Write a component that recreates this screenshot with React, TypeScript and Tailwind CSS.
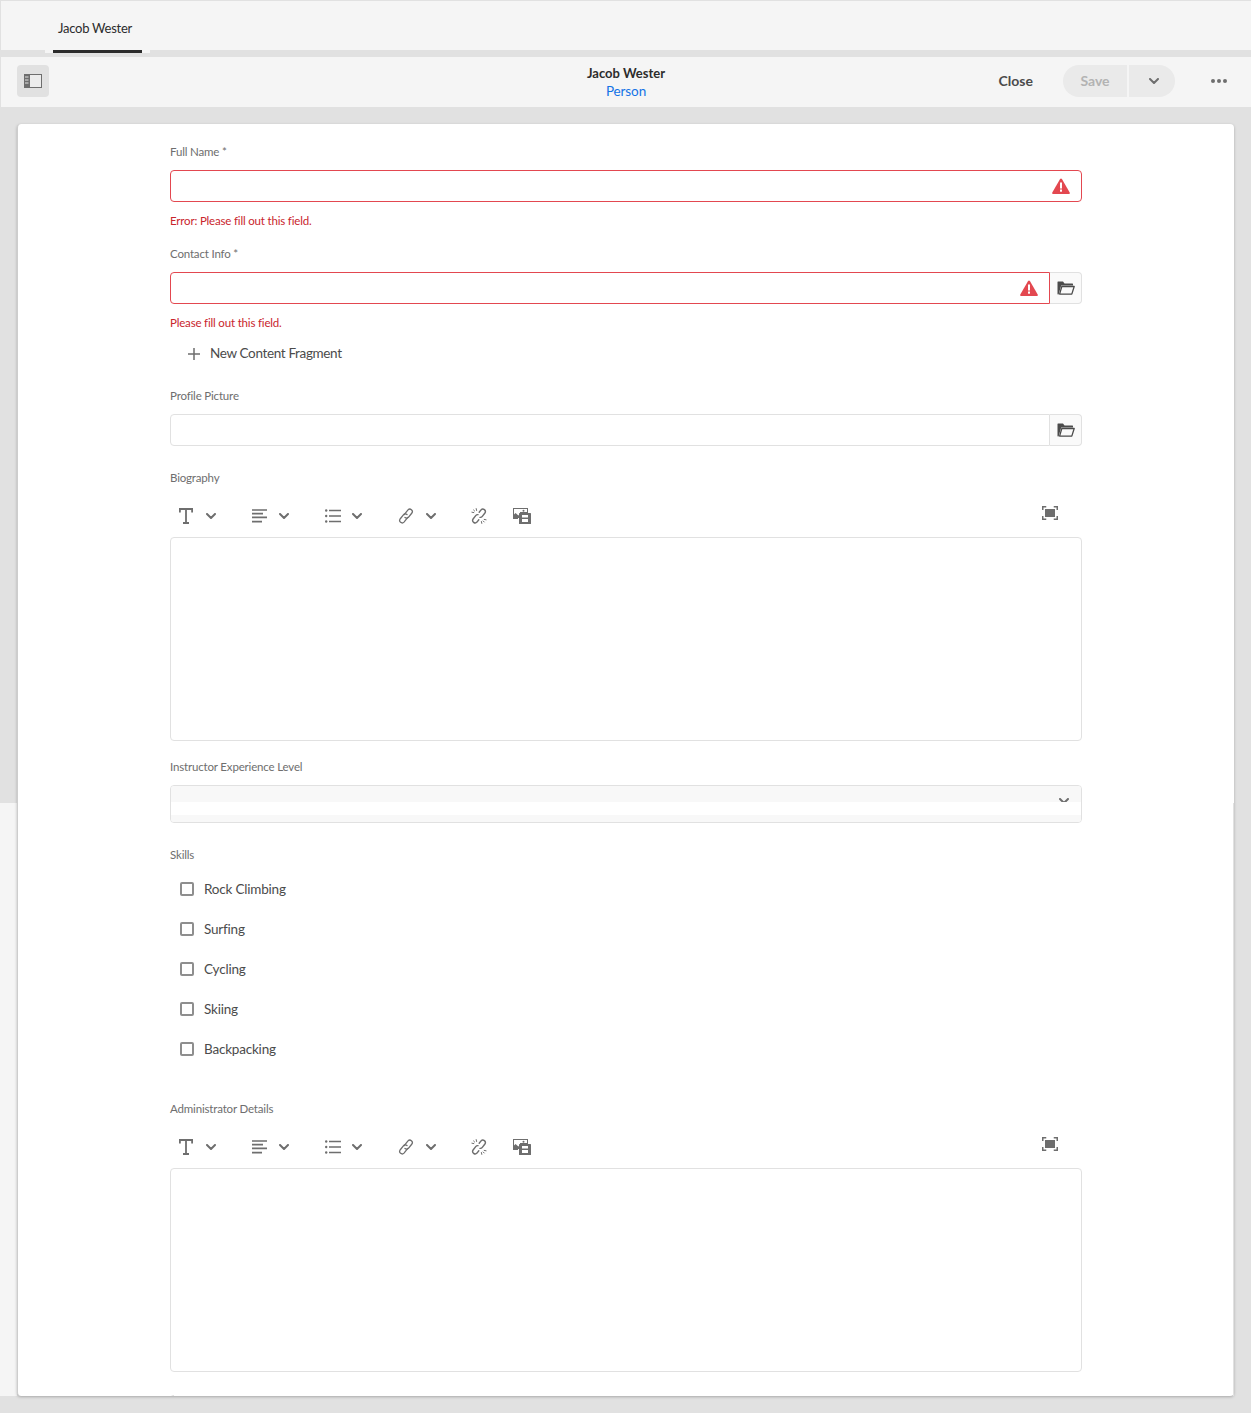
import React from "react";

const Chev = ({ className = "" }: { className?: string }) => (
  <svg width="10" height="6" viewBox="0 0 10 6" className={className}>
    <path d="M1 1l4 4 4-4" fill="none" stroke="#6e6e6e" strokeWidth="2" strokeLinecap="round" strokeLinejoin="round" />
  </svg>
);

const Warn = () => (
  <svg width="18" height="16" viewBox="0 0 18 16" className="shrink-0">
    <path d="M9 0.5c.4 0 .7.2.9.5l7.8 13.4c.4.7-.1 1.6-.9 1.6H1.2c-.8 0-1.3-.9-.9-1.6L8.1 1c.2-.3.5-.5.9-.5z" fill="#e34850" />
    <rect x="8" y="4.5" width="2" height="6" fill="#fff" />
    <rect x="8" y="11.5" width="2" height="2.2" fill="#fff" />
  </svg>
);

const Folder = () => (
  <svg width="18" height="14" viewBox="0 0 18 14">
    <path d="M1 0.5h5l1.5 2H15.5c.3 0 .5.2.5.5v1.5H4.2L1.6 13.5H1c-.4 0-.5-.2-.5-.5V1c0-.3.2-.5.5-.5z" fill="#4b4b4b" />
    <path d="M4.8 5.5h12.4l-2.4 7.6H2.6z" fill="none" stroke="#4b4b4b" strokeWidth="1.3" strokeLinejoin="round" />
  </svg>
);

const Toolbar = () => (
  <div className="flex items-center h-[32px] pl-[9px] mt-[14px] mb-[5px]">
    <div className="w-[73px] flex items-center">
      <svg width="14" height="16" viewBox="0 0 14 16" className="shrink-0">
        <path d="M.9 4.5V1h12.2v3.5M7 1v14M4 15h6" fill="none" stroke="#6e6e6e" strokeWidth="1.8" />
      </svg>
      <Chev className="ml-[13px]" />
    </div>
    <div className="w-[73px] flex items-center">
      <svg width="15" height="14" viewBox="0 0 15 14" className="shrink-0">
        <path d="M0 1h15M0 4.7h11M0 8.4h15M0 12.6h10" fill="none" stroke="#6e6e6e" strokeWidth="1.7" />
      </svg>
      <Chev className="ml-[12px]" />
    </div>
    <div className="w-[73px] flex items-center">
      <svg width="16" height="14" viewBox="0 0 16 14" className="shrink-0">
        <path d="M4 1.5h12M4 7h12M4 12.5h12" fill="none" stroke="#6e6e6e" strokeWidth="1.7" />
        <circle cx="1.2" cy="1.5" r="1.2" fill="#6e6e6e" />
        <circle cx="1.2" cy="7" r="1.2" fill="#6e6e6e" />
        <circle cx="1.2" cy="12.5" r="1.2" fill="#6e6e6e" />
      </svg>
      <Chev className="ml-[11px]" />
    </div>
    <div className="w-[73px] flex items-center">
      <svg width="16" height="16" viewBox="0 0 16 16" className="shrink-0">
        <g fill="none" stroke="#6e6e6e" strokeWidth="1.3" strokeLinecap="round">
          <path d="M6.2 6.6 10 1.9a2.5 2.5 0 0 1 3.9 3.1L10.6 9.2a2.5 2.5 0 0 1-3.6.3" />
          <path d="M9.8 9.4 6 14.1A2.5 2.5 0 0 1 2.1 11L5.4 6.8a2.5 2.5 0 0 1 3.6-.3" />
        </g>
      </svg>
      <Chev className="ml-[12px]" />
    </div>
    <div className="w-[42px] flex items-center">
      <svg width="16" height="16" viewBox="0 0 16 16" className="shrink-0">
        <g fill="none" stroke="#6e6e6e" strokeWidth="1.4" strokeLinecap="round">
          <path d="M8.2 4.2 10 1.9a2.5 2.5 0 0 1 3.9 3.1l-2.6 3.4a2.5 2.5 0 0 1-2.3 1" />
          <path d="M7.8 11.8 6 14.1A2.5 2.5 0 0 1 2.1 11l2.6-3.4a2.5 2.5 0 0 1 2.3-1" />
          <path d="M5.2.6l.4 1.9M.9 4.2l1.9.4M10.8 15.4l-.4-1.9M15.1 11.8l-1.9-.4M13.2 14l-1-1M2.6 2l1 1" strokeWidth="1" />
        </g>
      </svg>
    </div>
    <svg width="18" height="16" viewBox="0 0 18 16" className="shrink-0">
      <path d="M0 0h15v5H8v4H5v2H0z" fill="#6e6e6e" />
      <path d="M1 1h13v3H7v3.5H1z" fill="#fff" />
      <path d="M0 10V7.5l2.5-2.5L6 8v2z" fill="#6e6e6e" />
      <circle cx="10.5" cy="2.7" r="1" fill="#6e6e6e" />
      <rect x="6" y="5" width="12" height="11" rx=".5" fill="#6e6e6e" />
      <rect x="9" y="7" width="6" height="2.5" fill="#fff" />
      <rect x="9" y="11" width="6" height="3" fill="#fff" />
    </svg>
    <div className="ml-auto mr-[24px] mb-[6px] relative w-[16px] h-[14px]">
      <svg width="16" height="14" viewBox="0 0 16 14">
        <path d="M.75 4V.75h3.5M11.75.75h3.5V4M.75 10v3.25h3.5M11.75 13.25h3.5V10" fill="none" stroke="#6e6e6e" strokeWidth="1.5" />
        <rect x="3" y="3" width="10" height="8" fill="#6e6e6e" />
      </svg>
    </div>
  </div>
);

const Label = ({ children, className = "" }: { children: React.ReactNode; className?: string }) => (
  <div className={`text-[11.5px] tracking-[-0.17px] leading-[16px] text-[#6e6e6e] ${className}`}>{children}</div>
);

const Err = ({ children }: { children: React.ReactNode }) => (
  <div className="text-[11.5px] tracking-[-0.18px] leading-[16px] text-[#c9252d] mt-[11px]">{children}</div>
);

const PathField = ({ error }: { error?: boolean }) => (
  <div className="flex h-[32px] mt-[10px]">
    <div
      className={
        error
          ? "flex-1 flex items-center justify-end pr-[11px] bg-white border border-[#e34850] rounded-l-[4px]"
          : "flex-1 bg-white border border-[#e1e1e1] rounded-l-[4px]"
      }
    >
      {error && <Warn />}
    </div>
    <div className="w-[32px] flex items-center justify-center bg-[#fafafa] border border-l-0 border-[#e1e1e1] rounded-r-[4px]">
      <Folder />
    </div>
  </div>
);

const Check = ({ label }: { label: string }) => (
  <div className="flex items-center h-[40px] pl-[10px]">
    <div className="w-[14px] h-[14px] border-2 border-[#8e8e8e] rounded-[2px] bg-white" />
    <span className="ml-[10px] text-[13.5px] tracking-[-0.2px] leading-[18px] -mt-[1px] text-[#4b4b4b]">{label}</span>
  </div>
);

export default function App() {
  return (
    <div
      className="w-[1251px] h-[1413px] bg-[#e1e1e1] relative overflow-hidden flex flex-col"
      style={{ fontFamily: "Lato, 'Open Sans', sans-serif" }}
    >
      {/* tab bar */}
      <div className="h-[50px] bg-[#f5f5f5] border-t border-l border-[#e1e1e1] shrink-0 pl-[52px]">
        <div className="h-[49px] w-[105px] pl-[5px] pt-[7px] flex items-center text-[13px] tracking-[-0.25px] text-[#2c2c2c]">Jacob Wester</div>
      </div>
      <div className="h-[7px] shrink-0 flex pl-[45px]">
        <div className="h-[3px] w-[8px] bg-[#f5f5f5]" />
        <div className="h-[3px] w-[89px] bg-[#2c2c2c]" />
        <div className="h-[3px] w-[8px] bg-[#f5f5f5]" />
      </div>

      {/* action bar */}
      <div className="h-[50px] bg-[#f5f5f5] border-l border-[#e1e1e1] shrink-0 flex items-center pl-[16px] pr-[24px] pb-[2px] relative">
        <div className="w-[32px] h-[32px] bg-[#e1e1e1] rounded-[4px] flex items-center justify-center">
          <svg width="18" height="14" viewBox="0 0 18 14">
            <rect x=".5" y=".5" width="17" height="13" fill="#ececec" stroke="#6e6e6e" />
            <rect x="0" y="0" width="6" height="14" fill="#6e6e6e" />
            <path d="M1 3h3.5M1 6h3.5M1 9h3.5" stroke="#e1e1e1" strokeWidth="1" />
          </svg>
        </div>
        <div className="flex-1" />
        <div className="absolute left-0 right-0 top-[7px] flex flex-col items-center">
          <div className="text-[13px] leading-[18px] font-bold text-[#2c2c2c]">Jacob Wester</div>
          <div className="text-[13.5px] tracking-[-0.1px] leading-[18px] text-[#1473e6]">Person</div>
        </div>
        <span className="relative text-[14px] font-bold text-[#4b4b4b] mr-[30px] -mt-[1px]">Close</span>
        <div className="relative flex h-[32px]">
          <div className="w-[64px] pb-[1px] bg-[#eaeaea] rounded-l-full flex items-center justify-center text-[14px] font-bold text-[#b3b3b3]">Save</div>
          <div className="w-[46px] ml-[2px] pl-[4px] bg-[#eaeaea] rounded-r-full flex items-center justify-center">
            <Chev />
          </div>
        </div>
        <svg width="16" height="4" viewBox="0 0 16 4" className="relative ml-[36px]">
          <circle cx="2" cy="2" r="2" fill="#6e6e6e" />
          <circle cx="8" cy="2" r="2" fill="#6e6e6e" />
          <circle cx="14" cy="2" r="2" fill="#6e6e6e" />
        </svg>
      </div>

      {/* stitched background strip */}
      <div className="absolute left-0 top-[803px] w-[17px] h-[593px] bg-[#f5f5f5]" />

      {/* card */}
      <div className="relative mt-[17px] ml-[17px] w-[1217px] h-[1272px] bg-white border-l border-[#cdcdcd] rounded-[4px] shadow-[0_1px_3px_rgba(0,0,0,0.25)] pl-[152px] pt-[20px] overflow-hidden">
        <div className="w-[912px]">
          <Label>Full Name *</Label>
          <div className="mt-[10px] h-[32px] border border-[#e34850] rounded-[4px] flex items-center justify-end pr-[11px]">
            <Warn />
          </div>
          <Err>Error: Please fill out this field.</Err>

          <Label className="mt-[17px]">Contact Info *</Label>
          <PathField error />
          <Err>Please fill out this field.</Err>

          <div className="mt-[7px] h-[32px] flex items-center pl-[18px] text-[13.5px] tracking-[-0.35px] text-[#4b4b4b]">
            <svg width="12" height="12" viewBox="0 0 12 12" className="shrink-0">
              <path d="M6 0v12M0 6h12" stroke="#6e6e6e" strokeWidth="1.5" />
            </svg>
            <span className="ml-[10px] -mt-[1px]">New Content Fragment</span>
          </div>

          <Label className="mt-[18px]">Profile Picture</Label>
          <PathField />

          <Label className="mt-[24px]">Biography</Label>
          <Toolbar />
          <div className="h-[204px] border border-[#e1e1e1] rounded-[4px]" />

          <Label className="mt-[18px]">Instructor Experience Level</Label>
          <div className="mt-[10px] h-[38px] border border-[#e1e1e1] rounded-[4px] overflow-hidden flex flex-col">
            <div className="h-[16px] bg-[#f8f8f8] flex justify-end pr-[12px] overflow-hidden">
              <Chev className="mt-[12px]" />
            </div>
            <div className="h-[13px] bg-white" />
            <div className="flex-1 bg-[#f8f8f8]" />
          </div>

          <Label className="mt-[24px]">Skills</Label>
          <div className="mt-[6px]">
            <Check label="Rock Climbing" />
            <Check label="Surfing" />
            <Check label="Cycling" />
            <Check label="Skiing" />
            <Check label="Backpacking" />
          </div>

          <Label className="mt-[32px]">Administrator Details</Label>
          <Toolbar />
          <div className="h-[204px] border border-[#e1e1e1] rounded-[4px]" />
          <div className="mt-[23px] h-[8px] w-[4px] border-l border-t border-[#e1e1e1] rounded-tl-[4px]" />
        </div>
      </div>

      {/* stitched right edge */}
      <div className="absolute left-[1233px] top-[803px] w-[1px] h-[593px] bg-[#e1e1e1]" />
    </div>
  );
}
